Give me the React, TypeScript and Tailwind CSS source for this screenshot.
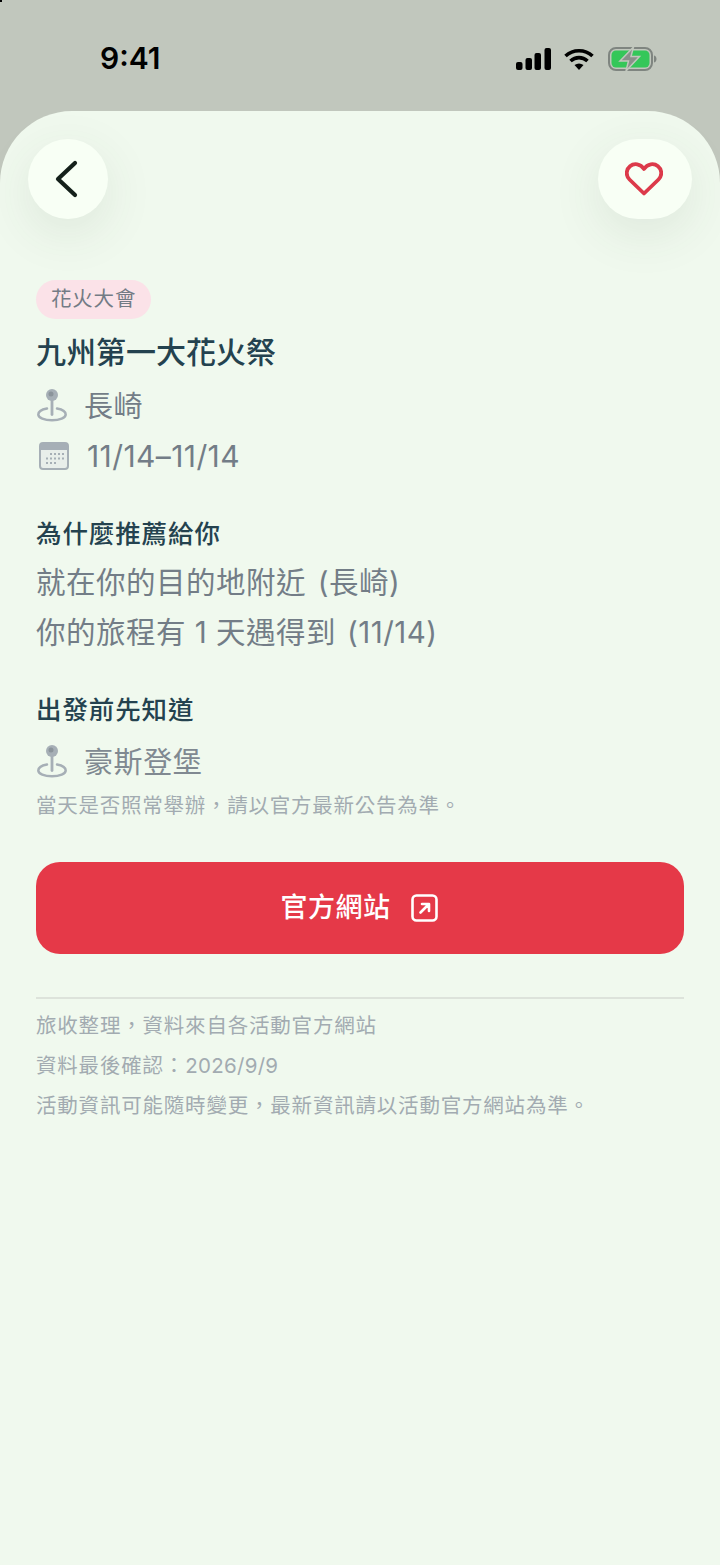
const font = "font-['Inter','Noto_Sans_CJK_TC',sans-serif]";

// CJK punctuation sits centred in its box in the TC face
function Punct({ children }: { children: string }) {
    return <span className="font-['Noto_Sans_CJK_TC',sans-serif] leading-none">{children}</span>;
}

function PinIcon() {
    return (
        <svg width="30" height="34" viewBox="0 0 30 34" fill="none" className="shrink-0 ml-[1px]">
            <path d="M10 20.500C4.500 21.500 1.300 23.800 1.300 26.500c0 3.200 6 5.800 13.700 5.800s13.700-2.600 13.700-5.800c0-2.700-3.200-5-8.700-6" stroke="#a6afb6" strokeWidth="2.500" strokeLinecap="round" />
            <path d="M15 12v14.500" stroke="#a6afb6" strokeWidth="2.800" strokeLinecap="round" />
            <circle cx="15" cy="7" r="6" fill="#a6afb6" />
            <circle cx="14" cy="6" r="2.500" fill="#8b949b" />
        </svg>
    );
}

function CalendarIcon() {
    return (
        <svg width="30" height="28" viewBox="0 0 30 28" fill="none" className="shrink-0">
            <rect x="1" y="1" width="28" height="26" rx="3" fill="#e8eeea" stroke="#a6afb6" strokeWidth="2" />
            <path d="M1 4a3 3 0 0 1 3-3h22a3 3 0 0 1 3 3v4H1z" fill="#a6afb6" />
            <g fill="#a6afb6">
                <rect x="11" y="11" width="2" height="2" />
                <rect x="15" y="11" width="2" height="2" />
                <rect x="19" y="11" width="2" height="2" />
                <rect x="23" y="11" width="2" height="2" />
                <rect x="7" y="15.500" width="2" height="2" />
                <rect x="11" y="15.500" width="2" height="2" />
                <rect x="15" y="15.500" width="2" height="2" />
                <rect x="19" y="15.500" width="2" height="2" />
                <rect x="23" y="15.500" width="2" height="2" />
                <rect x="7" y="20" width="2" height="2" />
                <rect x="11" y="20" width="2" height="2" />
                <rect x="15" y="20" width="2" height="2" />
            </g>
        </svg>
    );
}

function StatusIcons() {
    return (
        <div className="flex items-center gap-[13px]">
            <svg width="35" height="22" viewBox="0 0 35 22" fill="#000">
                <rect x="0" y="14" width="6.500" height="8" rx="2" />
                <rect x="9.500" y="10" width="6.500" height="12" rx="2" />
                <rect x="18.500" y="5" width="6.500" height="17" rx="2" />
                <rect x="28.500" y="0" width="6.500" height="22" rx="2" />
            </svg>
            <svg width="30" height="22" viewBox="0 0 30 22" fill="none" stroke="#000" strokeWidth="3.600">
                <path d="M1.500 8C9 1 21 1 28.500 8" />
                <path d="M6.500 13c5-4.500 12-4.500 17 0" />
                <path d="M15 22l-4.500-5c3-2 6-2 9 0z" fill="#000" stroke="none" />
            </svg>
            <svg width="49" height="24" viewBox="0 0 49 24" fill="none" className="ml-[1px]">
                <rect x="1" y="1" width="43" height="22" rx="7" stroke="#7f8580" strokeWidth="2" />
                <rect x="3.500" y="3.500" width="38" height="17" rx="4.500" fill="#34c759" />
                <path d="M46 8.500c2 .6 2.500 2 2.500 3.500s-.5 2.900-2.500 3.500z" fill="#7f8580" />
                <path d="M25.500 0L12 14h8.500L18 24l13.500-14.500H23z" fill="#8a908b" stroke="#c1c7bd" strokeWidth="1.500" />
            </svg>
        </div>
    );
}

export default function App() {
    return (
        <div lang="zh-TW" className={`${font} relative w-[720px] h-[1565px] overflow-hidden bg-[#c1c7bd] flex flex-col`}>
            <div className="absolute top-0 left-0 w-[2px] h-[2px] bg-black" />

            {/* Status bar */}
            <div className="h-[111px] shrink-0 flex justify-between items-start pt-[39px] pl-[100px] pr-[63px]">
                <span className="text-[30px] leading-[38px] font-semibold text-black">9:41</span>
                <div className="pt-[8px]">
                    <StatusIcons />
                </div>
            </div>

            {/* Sheet */}
            <div className="flex-1 bg-[#f0f9ee] rounded-t-[72px] px-[36px] relative">
                <div className="flex justify-between pt-[28px] -mx-[8px]">
                    <button className="w-[80px] h-[80px] rounded-full bg-[#f8fff5] flex items-center justify-center shadow-[0_14px_50px_rgba(60,80,60,0.1)]">
                        <svg width="24" height="38" viewBox="0 0 24 38" fill="none" stroke="#14201a" strokeWidth="4.200" strokeLinecap="round" strokeLinejoin="round" className="-ml-[4px]">
                            <path d="M21 3L4 19l17 16" />
                        </svg>
                    </button>
                    <button className="w-[94px] h-[80px] rounded-full bg-[#f8fff5] flex items-center justify-center shadow-[0_14px_50px_rgba(60,80,60,0.1)]">
                        <svg width="38" height="34" viewBox="0 0 38 34" fill="none" stroke="#dc3a4a" strokeWidth="3.800" strokeLinejoin="round" className="-ml-[2px]">
                            <path d="M19 31.500L4.500 17.500C0.500 13.500 1 7.500 5 4.200 9 1 15.500 1.500 19 7c3.500-5.500 10-6 14-2.800 4 3.300 4.500 9.300.5 13.300z" />
                        </svg>
                    </button>
                </div>

                <div className="mt-[61px] inline-flex h-[39px] items-center rounded-full bg-[#fbe2e8] px-[15px] text-[20.500px] tracking-[0.8px] text-[#737b85]">
                    花火大會
                </div>
                <h1 className="mt-[13px] text-[30px] leading-[40px] font-medium text-[#24424f]">九州第一大花火祭</h1>

                <div className="mt-[13px] flex items-center gap-[17px] h-[40px]">
                    <PinIcon />
                    <span className="pt-[3px] text-[29px] leading-[40px] tracking-[0.6px] text-[#737d87]">長崎</span>
                </div>
                <div className="mt-[11px] flex items-center gap-[18px] h-[40px] pl-[3px]">
                    <CalendarIcon />
                    <span className="text-[30px] leading-[40px] tracking-[0.4px] text-[#737d87]">11/14–11/14</span>
                </div>

                <h2 className="mt-[40px] text-[25.500px] leading-[36px] tracking-[0.9px] font-medium text-[#24424f]">為什麼推薦給你</h2>
                <p className="mt-[5px] text-[29.500px] leading-[50px] tracking-[0.5px] text-[#737d87]">
                    就在你的目的地附近 <span className="ml-[3px]">(</span>長崎)
                </p>
                <p className="text-[29.500px] leading-[50px] tracking-[0.5px] text-[#737d87]">
                    你的旅程有 1 天遇得到 <span className="ml-[2px]">(</span>11/14)
                </p>

                <h2 className="mt-[35px] text-[25.500px] leading-[36px] tracking-[0.9px] font-medium text-[#24424f]">出發前先知道</h2>
                <div className="mt-[13px] flex items-center gap-[17px] h-[40px]">
                    <PinIcon />
                    <span className="pt-[3px] text-[29px] leading-[40px] tracking-[0.6px] text-[#808991]">豪斯登堡</span>
                </div>
                <p className="mt-[10px] text-[20.500px] leading-[30px] tracking-[0.75px] text-[#a2abb1]">
                    當天是否照常舉辦<Punct>，</Punct>請以官方最新公告為準<Punct>。</Punct>
                </p>

                <button className="mt-[41px] w-full h-[92px] rounded-[24px] bg-[#e53948] flex items-center justify-center gap-[20px] pr-[2px] text-white">
                    <span className="text-[27px] leading-[36px] tracking-[0.5px] font-medium">官方網站</span>
                    <svg width="27" height="28" viewBox="0 0 27 28" fill="none" stroke="#fff" strokeWidth="2.600" strokeLinecap="round" strokeLinejoin="round">
                        <rect x="1.500" y="1.500" width="24" height="25" rx="4" />
                        <path d="M9.500 18.500l8-8M11 10h7v7" />
                    </svg>
                </button>

                <div className="mt-[43px] border-t-2 border-[#dde3db] pt-[7px] text-[20.500px] leading-[40px] tracking-[0.8px] text-[#a2abb1]">
                    <p>旅收整理<Punct>，</Punct>資料來自各活動官方網站</p>
                    <p>資料最後確認<Punct>：</Punct><span className="tracking-[0.3px]">2026/9/9</span></p>
                    <p>活動資訊可能隨時變更<Punct>，</Punct>最新資訊請以活動官方網站為準<Punct>。</Punct></p>
                </div>
            </div>
        </div>
    );
}
